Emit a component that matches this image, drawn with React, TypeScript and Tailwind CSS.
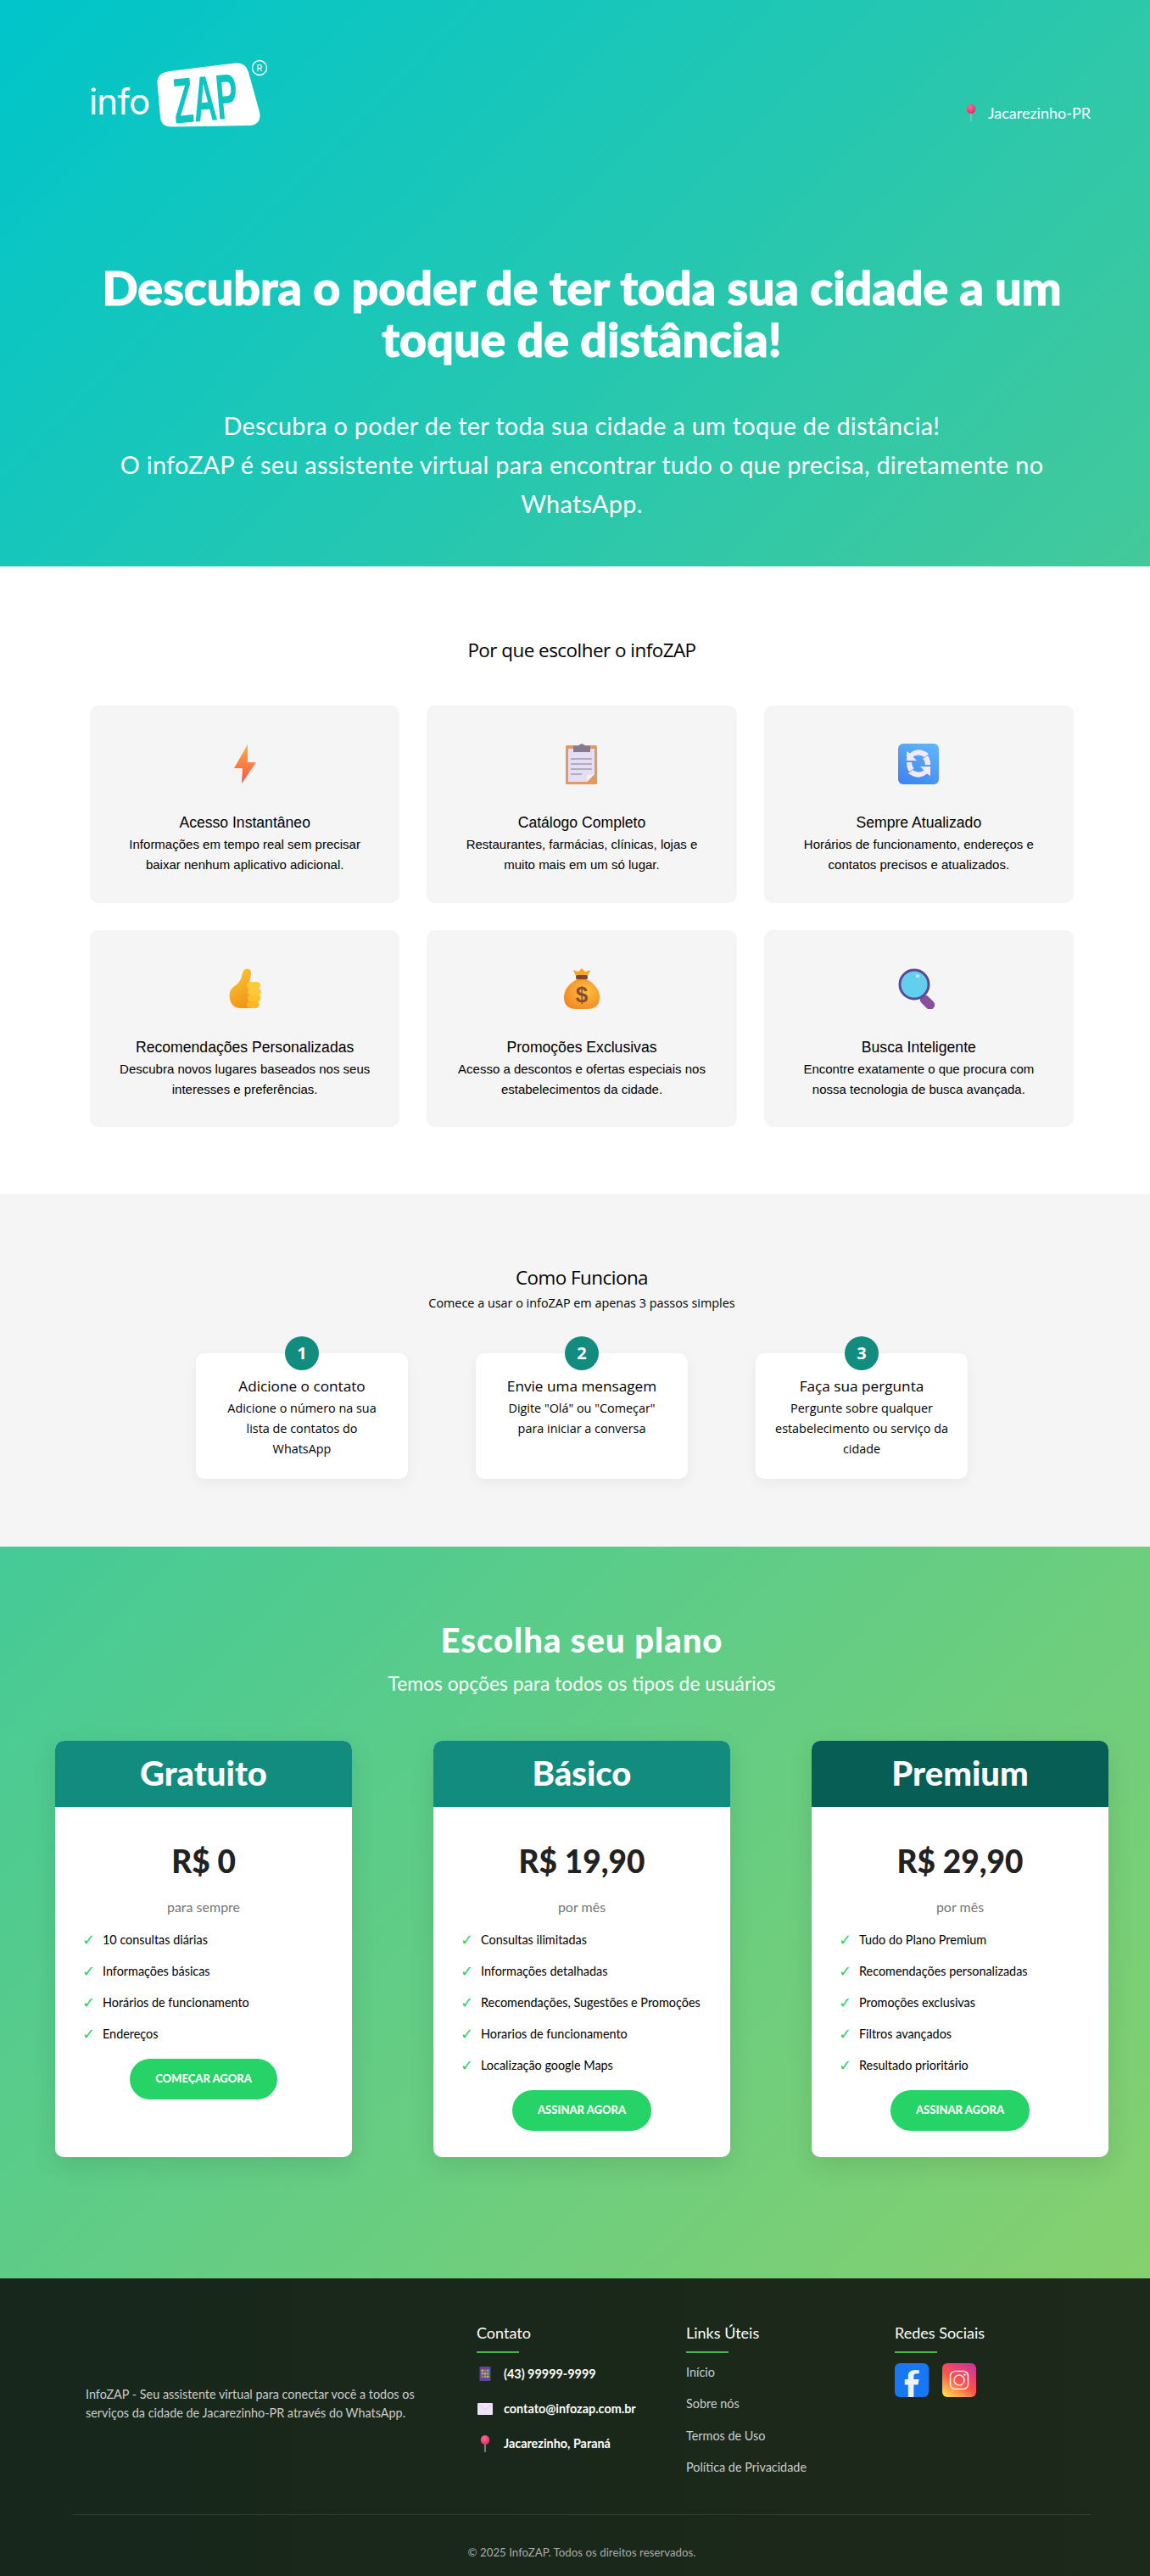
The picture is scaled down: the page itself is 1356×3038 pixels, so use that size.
const sans = "font-['Lato','Noto_Sans',sans-serif]";

function Logo() {
  return (
    <svg width="260" height="120" viewBox="0 0 260 120" className="block">
      <text x="25" y="85" fontFamily="Inter, sans-serif" fontSize="42" fontWeight="400" letterSpacing="-0.8" fill="#fff">
        info
      </text>
      <path
        d="M120 34 L197 24.5 Q209 23 213 35 L226 82 Q229 96 216 98 L122 99.5 Q110 99.5 109 88 L105.5 48 Q105 36 120 34 Z"
        fill="#fff"
      />
      <g transform="rotate(-5 165 62)">
        <text
          x="0"
          y="0"
          transform="translate(124 92) scale(0.86 1.72)"
          fontFamily="Liberation Sans, sans-serif"
          fontSize="44"
          fontWeight="700"
          fill="#0fc5c0"
        >
          ZAP
        </text>
      </g>
      <circle cx="226" cy="30" r="8.5" fill="none" stroke="#fff" strokeWidth="1.3" />
      <text x="222.6" y="34" fontFamily="Inter, sans-serif" fontSize="10.5" fill="#fff">
        R
      </text>
    </svg>
  );
}

function PinIcon({ size = 20 }: { size?: number }) {
  return (
    <svg width={size} height={size} viewBox="0 0 20 20">
      <defs>
        <radialGradient id="pinHead" cx="0.4" cy="0.3" r="0.8">
          <stop offset="0" stopColor="#ff6b95" />
          <stop offset="1" stopColor="#e0245e" />
        </radialGradient>
      </defs>
      <rect x="9.4" y="8" width="1.2" height="12" fill="#b9b6c0" />
      <ellipse cx="10" cy="5.5" rx="5.2" ry="5.5" fill="url(#pinHead)" />
    </svg>
  );
}

function BoltEmoji() {
  return (
    <svg width="48" height="48" viewBox="0 0 48 48">
      <defs>
        <linearGradient id="bolt" x1="0.5" y1="0" x2="0.4" y2="1">
          <stop offset="0" stopColor="#ffb03b" />
          <stop offset="1" stopColor="#f8504f" />
        </linearGradient>
      </defs>
      <path d="M27 1 L11 29 L21 29 L20 47 L37 22 L27 22 Z" fill="url(#bolt)" />
    </svg>
  );
}

function ClipboardEmoji() {
  return (
    <svg width="48" height="48" viewBox="0 0 48 48">
      <rect x="5" y="2" width="37" height="46" rx="1.5" fill="#e19a5f" />
      <path d="M8 6 H39 V36 L30 45 H8 Z" fill="#e5ddf2" />
      <path d="M30 45 L30 37 L39 36 Z" fill="#f3eef9" />
      <path d="M14 6 V2.5 H20 Q24 -2 28 2.5 H34 V10 H14 Z" fill="#857a8e" />
      <path d="M11 18 H36 M11 24 H36 M11 30 H36 M11 36 H24" stroke="#a39bb0" strokeWidth="1.5" />
    </svg>
  );
}

function RefreshEmoji() {
  return (
    <svg width="48" height="48" viewBox="0 0 48 48">
      <defs>
        <linearGradient id="blueBox" x1="0.7" y1="0" x2="0.2" y2="1">
          <stop offset="0" stopColor="#5fb3fb" />
          <stop offset="1" stopColor="#3f85ee" />
        </linearGradient>
      </defs>
      <rect x="0" y="0" width="48" height="48" rx="6" fill="url(#blueBox)" />
      <path d="M10 9 L10 20 L22 20 L17.5 15.5 Q24 11.5 31 16 L36 12 Q24 3 14 11.5 Z" fill="#f2eafc" />
      <path d="M38 38 L38 27 L26 27 L30.5 31.5 Q24 35.5 17 31 L12 35 Q24 44 34 35.5 Z" fill="#f2eafc" />
      <path d="M10 22 L16 22 Q16.5 28 19 29 L13 33 Q10 29 10 22 Z M38 25 L32 25 Q31.5 19 29 18 L35 14 Q38 18 38 25 Z" fill="#f2eafc" />
    </svg>
  );
}

function ThumbEmoji() {
  return (
    <svg width="48" height="48" viewBox="0 0 48 48">
      <defs>
        <linearGradient id="thumb" x1="0.3" y1="0" x2="0.7" y2="1">
          <stop offset="0" stopColor="#ffc22f" />
          <stop offset="1" stopColor="#f0931a" />
        </linearGradient>
      </defs>
      <path
        d="M24 1 Q31 -1 31 7 L29 17 L33 47 L18 47 Q6 46 5.5 32 Q5.5 24 13 20 Q18 16 20 10 Q21 3 24 1 Z"
        fill="url(#thumb)"
      />
      <rect x="26" y="16" width="16" height="8.5" rx="4.2" fill="#ffc93c" />
      <rect x="27" y="23.5" width="16" height="8.5" rx="4.2" fill="#ffc93c" />
      <rect x="27" y="31" width="15.5" height="8.5" rx="4.2" fill="#ffc22f" />
      <rect x="26" y="38.5" width="14.5" height="8.5" rx="4.2" fill="#fbb526" />
    </svg>
  );
}

function MoneyEmoji() {
  return (
    <svg width="48" height="48" viewBox="0 0 48 48">
      <defs>
        <radialGradient id="bag" cx="0.6" cy="0.4" r="0.8">
          <stop offset="0" stopColor="#ffc23c" />
          <stop offset="1" stopColor="#ef7d1e" />
        </radialGradient>
      </defs>
      <path d="M17 9 L14 2 L20 4 L24 0 L28 4 L34 2 L31 9 Z" fill="#f6a623" />
      <rect x="17" y="8" width="14" height="5" rx="2" fill="#7d4533" />
      <path d="M18 13 H30 Q46 22 45 36 Q44 48 30 48 H18 Q4 48 3 36 Q2 22 18 13 Z" fill="url(#bag)" />
      <text x="24" y="40" textAnchor="middle" fontFamily="Liberation Sans, sans-serif" fontSize="26" fontWeight="700" fill="#8a4a34">
        $
      </text>
    </svg>
  );
}

function SearchEmoji() {
  return (
    <svg width="48" height="48" viewBox="0 0 48 48">
      <rect x="29" y="30" width="11" height="20" rx="5.5" transform="rotate(-45 34.5 40)" fill="#8a4f9c" />
      <circle cx="19" cy="19" r="17" fill="#62cfee" stroke="#5a4a96" strokeWidth="3" />
      <ellipse cx="23" cy="9" rx="2.5" ry="2" fill="#b5ecfb" />
    </svg>
  );
}

function PhoneEmoji() {
  return (
    <svg width="20" height="20" viewBox="0 0 20 20">
      <rect x="3.5" y="1" width="13" height="17" rx="1" fill="#5c4a96" />
      <rect x="5.5" y="4.5" width="2.6" height="2.6" fill="#f4a630" />
      <rect x="8.7" y="4.5" width="2.6" height="2.6" fill="#e8585a" />
      <rect x="11.9" y="4.5" width="2.6" height="2.6" fill="#62b5e8" />
      <rect x="5.5" y="8" width="2.6" height="2.6" fill="#62b5e8" />
      <rect x="8.7" y="8" width="2.6" height="2.6" fill="#f4a630" />
      <rect x="11.9" y="8" width="2.6" height="2.6" fill="#6fc36a" />
      <rect x="5.5" y="11.5" width="2.6" height="2.6" fill="#e8585a" />
      <rect x="8.7" y="11.5" width="2.6" height="2.6" fill="#6fc36a" />
      <rect x="11.9" y="11.5" width="2.6" height="2.6" fill="#f4a630" />
    </svg>
  );
}

function MailEmoji() {
  return (
    <svg width="20" height="16" viewBox="0 0 20 16">
      <rect x="1" y="1" width="18" height="14" rx="1" fill="#ece3f6" />
      <path d="M1.5 2 L10 9 L18.5 2" fill="none" stroke="#d6c8e4" strokeWidth="0.8" />
    </svg>
  );
}

function FacebookIcon() {
  return (
    <svg width="40" height="40" viewBox="0 0 40 40">
      <rect width="40" height="40" rx="6" fill="#1877f2" />
      <path
        d="M27.5 25.5 L28.6 19 H22.4 V15.6 C22.4 13.8 23.3 12.2 25.8 12.2 H28.8 V8.4 C28.8 8.4 26.2 8 23.7 8 C18.8 8 15.8 11 15.8 15 V19 H11.8 V25.5 H15.8 V40 H22.4 V25.5 Z"
        fill="#edf1fb"
      />
    </svg>
  );
}

function InstagramIcon() {
  return (
    <svg width="40" height="40" viewBox="0 0 40 40">
      <defs>
        <linearGradient id="ig" x1="0.2" y1="1" x2="0.85" y2="0">
          <stop offset="0" stopColor="#ffd64f" />
          <stop offset="0.45" stopColor="#ff5347" />
          <stop offset="1" stopColor="#c9359c" />
        </linearGradient>
      </defs>
      <rect width="40" height="40" rx="6" fill="url(#ig)" />
      <rect x="9.5" y="9.5" width="21" height="21" rx="5.5" fill="none" stroke="#fde8e4" strokeWidth="1.6" />
      <circle cx="20" cy="20" r="6" fill="none" stroke="#fde8e4" strokeWidth="1.6" />
      <circle cx="26.5" cy="13.5" r="1.3" fill="#fde8e4" />
    </svg>
  );
}

const features = [
  { icon: <BoltEmoji />, title: "Acesso Instantâneo", text: ["Informações em tempo real sem precisar", "baixar nenhum aplicativo adicional."] },
  { icon: <ClipboardEmoji />, title: "Catálogo Completo", text: ["Restaurantes, farmácias, clínicas, lojas e", "muito mais em um só lugar."] },
  { icon: <RefreshEmoji />, title: "Sempre Atualizado", text: ["Horários de funcionamento, endereços e", "contatos precisos e atualizados."] },
  { icon: <ThumbEmoji />, title: "Recomendações Personalizadas", text: ["Descubra novos lugares baseados nos seus", "interesses e preferências."] },
  { icon: <MoneyEmoji />, title: "Promoções Exclusivas", text: ["Acesso a descontos e ofertas especiais nos", "estabelecimentos da cidade."] },
  { icon: <SearchEmoji />, title: "Busca Inteligente", text: ["Encontre exatamente o que procura com", "nossa tecnologia de busca avançada."] },
];

const steps = [
  { n: "1", title: "Adicione o contato", text: ["Adicione o número na sua", "lista de contatos do", "WhatsApp"] },
  { n: "2", title: "Envie uma mensagem", text: ['Digite "Olá" ou "Começar"', "para iniciar a conversa"] },
  { n: "3", title: "Faça sua pergunta", text: ["Pergunte sobre qualquer", "estabelecimento ou serviço da", "cidade"] },
];

const plans = [
  {
    name: "Gratuito",
    head: "bg-[#128c7e]",
    price: "R$ 0",
    period: "para sempre",
    items: ["10 consultas diárias", "Informações básicas", "Horários de funcionamento", "Endereços"],
    cta: "COMEÇAR AGORA",
  },
  {
    name: "Básico",
    head: "bg-[#128c7e]",
    price: "R$ 19,90",
    period: "por mês",
    items: ["Consultas ilimitadas", "Informações detalhadas", "Recomendações, Sugestões e Promoções", "Horarios de funcionamento", "Localização google Maps"],
    cta: "ASSINAR AGORA",
  },
  {
    name: "Premium",
    head: "bg-[#075e54]",
    price: "R$ 29,90",
    period: "por mês",
    items: ["Tudo do Plano Premium", "Recomendações personalizadas", "Promoções exclusivas", "Filtros avançados", "Resultado prioritário"],
    cta: "ASSINAR AGORA",
  },
];

const links = ["Início", "Sobre nós", "Termos de Uso", "Política de Privacidade"];

function FooterTitle({ children }: { children: string }) {
  return (
    <div>
      <h4 className="text-[18px] leading-[28px] text-white">{children}</h4>
      <div className="mt-[8px] h-[2px] w-[50px] bg-[#4caf50]" />
    </div>
  );
}

export default function App() {
  return (
    <div className="h-[3038px] w-[1356px] overflow-hidden">
      <div className={`w-[1372px] ${sans}`}>
        {/* Hero */}
        <section className="h-[668px] bg-[linear-gradient(135deg,#00c5cb,#44c99a)] text-center text-white">
          <header className="flex h-[170px] items-start justify-between pl-[80px] pr-[86px] pt-[50px]">
            <Logo />
            <div className="mt-[73px] flex items-center gap-[10px] text-[18px] leading-[20px]">
              <PinIcon />
              <span>Jacarezinho-PR</span>
            </div>
          </header>
          <h1 className="mt-[138px] text-[55.6px] font-black leading-[61.4px] [-webkit-text-stroke:1px_#fff]">
            Descubra o poder de ter toda sua cidade a um
            <br />
            toque de distância!
          </h1>
          <p className="mt-[48px] text-[28.8px] leading-[46px] tracking-[0.3px]">
            Descubra o poder de ter toda sua cidade a um toque de distância!
            <br />
            O infoZAP é seu assistente virtual para encontrar tudo o que precisa, diretamente no
            <br />
            WhatsApp.
          </p>
        </section>

        {/* Por que escolher */}
        <section className="bg-white pb-[79px] pt-[80px] text-black">
          <h2 className="text-center font-['Open_Sans',sans-serif] text-[22.4px] leading-[38px] tracking-[-0.5px]">Por que escolher o infoZAP</h2>
          <div className="mx-auto mt-[46px] grid w-[1160px] grid-cols-3 gap-[32px] font-['Liberation_Sans',sans-serif]">
            {features.map((f) => (
              <div key={f.title} className="h-[232.5px] rounded-[10px] bg-[#f5f5f5] pt-[45px] text-center">
                <div className="flex justify-center">{f.icon}</div>
                <h3 className="mt-[35px] text-[17.6px] leading-[21px]">{f.title}</h3>
                <p className="mt-[3px] text-[15px] leading-[24px]">
                  {f.text[0]}
                  <br />
                  {f.text[1]}
                </p>
              </div>
            ))}
          </div>
        </section>

        {/* Como funciona */}
        <section className="bg-[#f5f5f5] pb-[80px] pt-[80px] text-center font-['Open_Sans',sans-serif] text-black">
          <h2 className="text-[22.4px] leading-[38px] tracking-[-0.5px]">Como Funciona</h2>
          <p className="text-[14.4px] leading-[22px]">Comece a usar o infoZAP em apenas 3 passos simples</p>
          <div className="mt-[48px] flex justify-center gap-[80px]">
            {steps.map((s) => (
              <div key={s.n} className="relative h-[148px] w-[250px] rounded-[10px] bg-white pt-[25px] shadow-[0_5px_15px_rgba(0,0,0,0.05)]">
                <span className="absolute left-[105px] top-[-20px] flex h-[40px] w-[40px] items-center justify-center rounded-full bg-[#128c7e] text-[20px] font-bold text-white">
                  {s.n}
                </span>
                <h3 className="text-[17.2px] leading-[28px]">{s.title}</h3>
                <p className="text-[14.4px] leading-[24px]">
                  {s.text.map((line) => (
                    <span key={line} className="block">
                      {line}
                    </span>
                  ))}
                </p>
              </div>
            ))}
          </div>
        </section>

        {/* Planos */}
        <section className="h-[863px] bg-[linear-gradient(135deg,#45ca97,#86d06e)] pt-[85px] text-center">
          <h2 className="text-[40px] font-black leading-[50px] tracking-[1px] text-white">Escolha seu plano</h2>
          <p className="mt-[11px] text-[22.8px] leading-[30px] text-white">Temos opções para todos os tipos de usuários</p>
          <div className="mx-auto mt-[53px] grid w-[1242px] grid-cols-3 gap-[96px]">
            {plans.map((p) => (
              <div key={p.name} className="h-[491px] overflow-hidden rounded-[10px] bg-white shadow-[0_10px_30px_rgba(0,0,0,0.1)]">
                <div className={`flex h-[78px] items-center justify-center pb-[2px] text-[40px] font-black text-white ${p.head}`}>{p.name}</div>
                <div className="px-[32px] pt-[40px]">
                  <div className="text-[37px] font-black leading-[48px] text-[#222]">{p.price}</div>
                  <div className="mt-[18px] text-[16px] leading-[24px] text-[#777]">{p.period}</div>
                  <ul className="mt-[8px]">
                    {p.items.map((item) => (
                      <li key={item} className="flex h-[37px] items-center text-left text-[14.4px] text-black">
                        <span className="w-[24px] font-['DejaVu_Sans',sans-serif] text-[18px] leading-[20px] text-[#25d366]">✓</span>
                        <span>{item}</span>
                      </li>
                    ))}
                  </ul>
                  <div className="mt-[11px] flex justify-center">
                    <span className="flex h-[48px] items-center rounded-full bg-[#25d366] px-[30px] text-[13px] font-black text-white">{p.cta}</span>
                  </div>
                </div>
              </div>
            ))}
          </div>
        </section>

        {/* Footer */}
        <footer className="h-[351px] bg-[linear-gradient(90deg,#17271b,#1d291a)] pt-[50px]">
          <div className="mx-auto w-[1200px]">
            <div className="grid h-[229px] grid-cols-[461px_247px_246px_246px] border-b border-[#2f3d30] text-[14.4px]">
              <p className="self-center pb-[32px] pl-[15px] pr-[15px] leading-[22px] text-[#ccc]">
                InfoZAP - Seu assistente virtual para conectar você a todos os serviços da cidade de Jacarezinho-PR através do WhatsApp.
              </p>
              <div className="pl-[15px]">
                <FooterTitle>Contato</FooterTitle>
                <ul className="mt-[4px] font-bold text-white">
                  <li className="flex h-[41px] items-center gap-[12px]">
                    <PhoneEmoji />
                    <span>(43) 99999-9999</span>
                  </li>
                  <li className="flex h-[41px] items-center gap-[12px]">
                    <MailEmoji />
                    <span>contato@infozap.com.br</span>
                  </li>
                  <li className="flex h-[41px] items-center gap-[12px]">
                    <PinIcon />
                    <span>Jacarezinho, Paraná</span>
                  </li>
                </ul>
              </div>
              <div className="pl-[15px]">
                <FooterTitle>Links Úteis</FooterTitle>
                <ul className="mt-[4px] text-[#ccc]">
                  {links.map((l) => (
                    <li key={l} className="flex h-[37.5px] items-center">
                      {l}
                    </li>
                  ))}
                </ul>
              </div>
              <div className="pl-[15px]">
                <FooterTitle>Redes Sociais</FooterTitle>
                <div className="mt-[12px] flex gap-[16px]">
                  <FacebookIcon />
                  <InstagramIcon />
                </div>
              </div>
            </div>
            <p className="mt-[33px] text-center text-[13.3px] leading-[22px] text-[#aaa]">© 2025 InfoZAP. Todos os direitos reservados.</p>
          </div>
        </footer>
      </div>
    </div>
  );
}
